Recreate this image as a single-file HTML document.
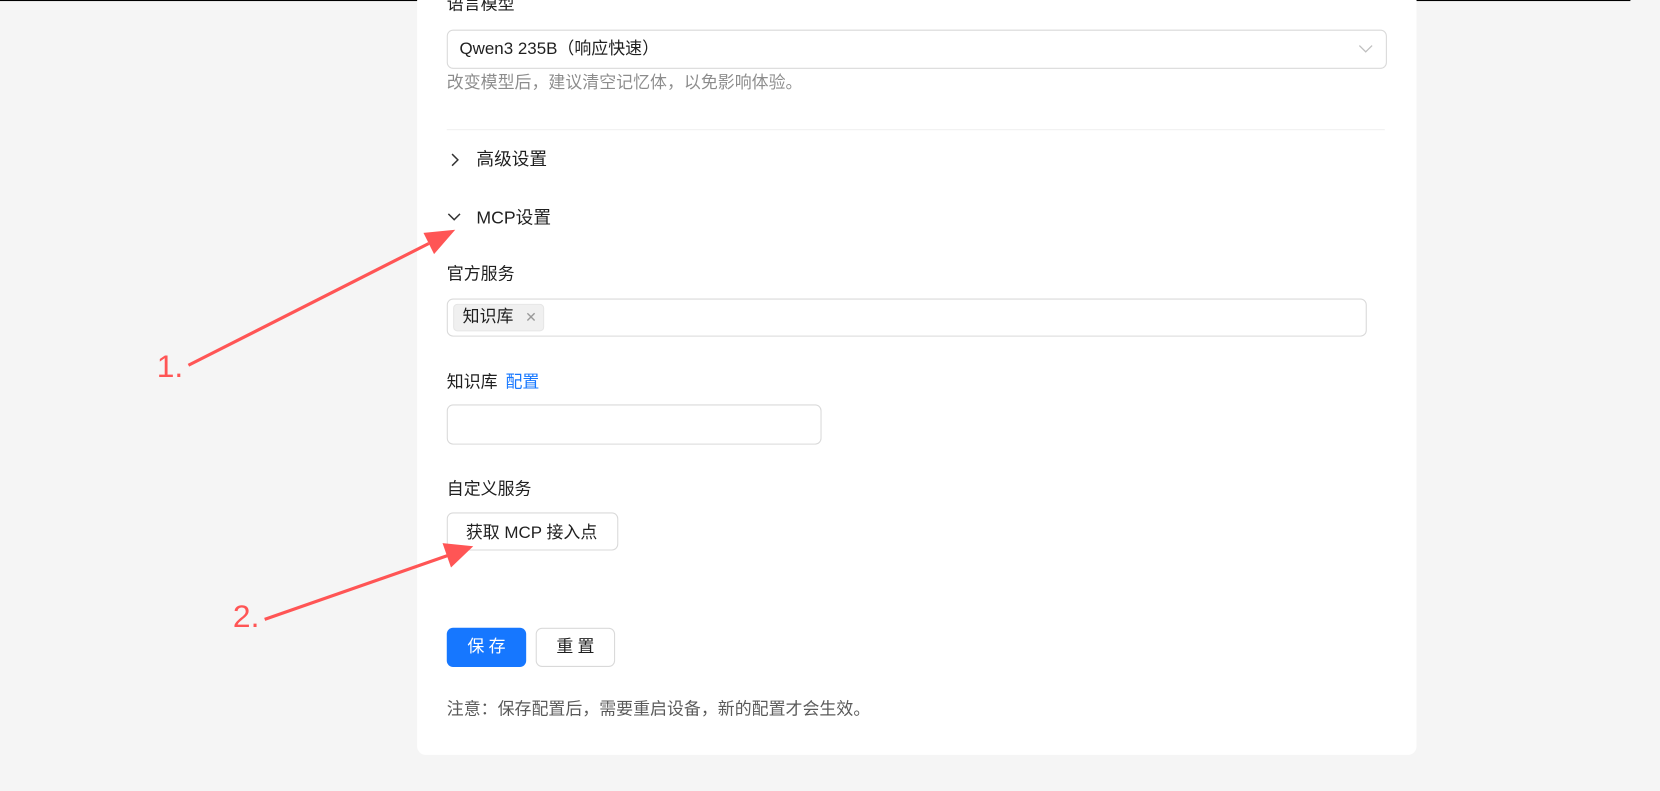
<!DOCTYPE html>
<html><head><meta charset="utf-8"><style>
*{box-sizing:border-box;margin:0;padding:0}
body{width:1660px;height:791px;background:#f5f5f5;font-family:"Liberation Sans","Noto Sans CJK SC",sans-serif;color:rgba(0,0,0,.88);overflow:hidden}
#w{position:absolute;left:0;top:0;width:1568px;height:747px;transform:scale(1.0587);transform-origin:0 0;font-size:16px}
.a{position:absolute}
.card{left:394px;top:-10px;width:944px;height:723px;background:#fff;border-radius:8px}
.inp{border:1px solid #d9d9d9;border-radius:6px;background:#fff}
.t{line-height:22px;white-space:nowrap}
</style></head><body><div id="w">
<div class="a" style="left:0;top:0;width:1540px;height:1px;background:#000"></div>
<div class="a card"></div>
<div class="a t" style="left:422px;top:-6px">语言模型</div>
<div class="a inp" style="left:422px;top:28px;width:888px;height:37px"></div>
<div class="a t" style="left:434px;top:36px">Qwen3 235B（响应快速）</div>
<svg class="a" style="left:1283px;top:40px" width="14" height="12"><path d="M1 3l6 6 6-6" fill="none" stroke="#bfbfbf" stroke-width="1.2"/></svg>
<div class="a t" style="left:422px;top:68px;color:rgba(0,0,0,.45)">改变模型后，建议清空记忆体，以免影响体验。</div>
<div class="a" style="left:422px;top:122px;width:886px;height:1px;background:#f0f0f0"></div>
<svg class="a" style="left:424px;top:144px" width="12" height="14"><path d="M3 1.5l5.5 5.5-5.5 5.5" fill="none" stroke="#333" stroke-width="1.4"/></svg>
<div class="a t" style="left:450px;top:140px;font-size:16.7px">高级设置</div>
<svg class="a" style="left:422px;top:199px" width="14" height="12"><path d="M1.5 3l5.5 5.5 5.5-5.5" fill="none" stroke="#333" stroke-width="1.4"/></svg>
<div class="a t" style="left:450px;top:195px;font-size:16.7px">MCP设置</div>
<div class="a t" style="left:422px;top:249px">官方服务</div>
<div class="a inp" style="left:422px;top:282px;width:869px;height:36px"></div>
<div class="a" style="left:428px;top:287px;width:86px;height:26px;background:#f0f0f0;border:1px solid #e6e6e6;border-radius:4px"></div>
<div class="a t" style="left:437px;top:289px">知识库</div>
<div class="a t" style="left:496px;top:289px;color:#999;font-size:13px">✕</div>
<div class="a t" style="left:422px;top:351px">知识库 <span style="color:#1677ff;margin-left:3px">配置</span></div>
<div class="a inp" style="left:422px;top:382px;width:354px;height:38px"></div>
<div class="a t" style="left:422px;top:452px">自定义服务</div>
<div class="a inp" style="left:422px;top:484px;width:162px;height:36px"></div>
<div class="a t" style="left:440px;top:493px">获取 MCP 接入点</div>
<div class="a" style="left:422px;top:593px;width:75px;height:37px;background:#1677ff;border-radius:6px;color:#fff;text-align:center;line-height:37px;letter-spacing:4px;padding-left:4px">保存</div>
<div class="a inp" style="left:506px;top:593px;width:75px;height:37px;text-align:center;line-height:35px;letter-spacing:4px;padding-left:4px">重置</div>
<div class="a t" style="left:422px;top:660px;color:rgba(0,0,0,.65)">注意：保存配置后，需要重启设备，新的配置才会生效。</div>
<svg class="a" style="left:0;top:0" width="1568" height="747">
<g stroke="#f55" fill="#f55">
<line x1="178" y1="345" x2="405" y2="230" stroke-width="3"/>
<path d="M430 217L400 220L410 240Z" stroke="none"/>
<line x1="250" y1="585" x2="425" y2="524" stroke-width="3"/>
<path d="M447 516L418 513L426 536Z" stroke="none"/>
</g>
<text x="148" y="356" fill="#f55" font-size="30" font-family="Liberation Sans">1.</text>
<text x="220" y="592" fill="#f55" font-size="30" font-family="Liberation Sans">2.</text>
</svg>
</div></body></html>
